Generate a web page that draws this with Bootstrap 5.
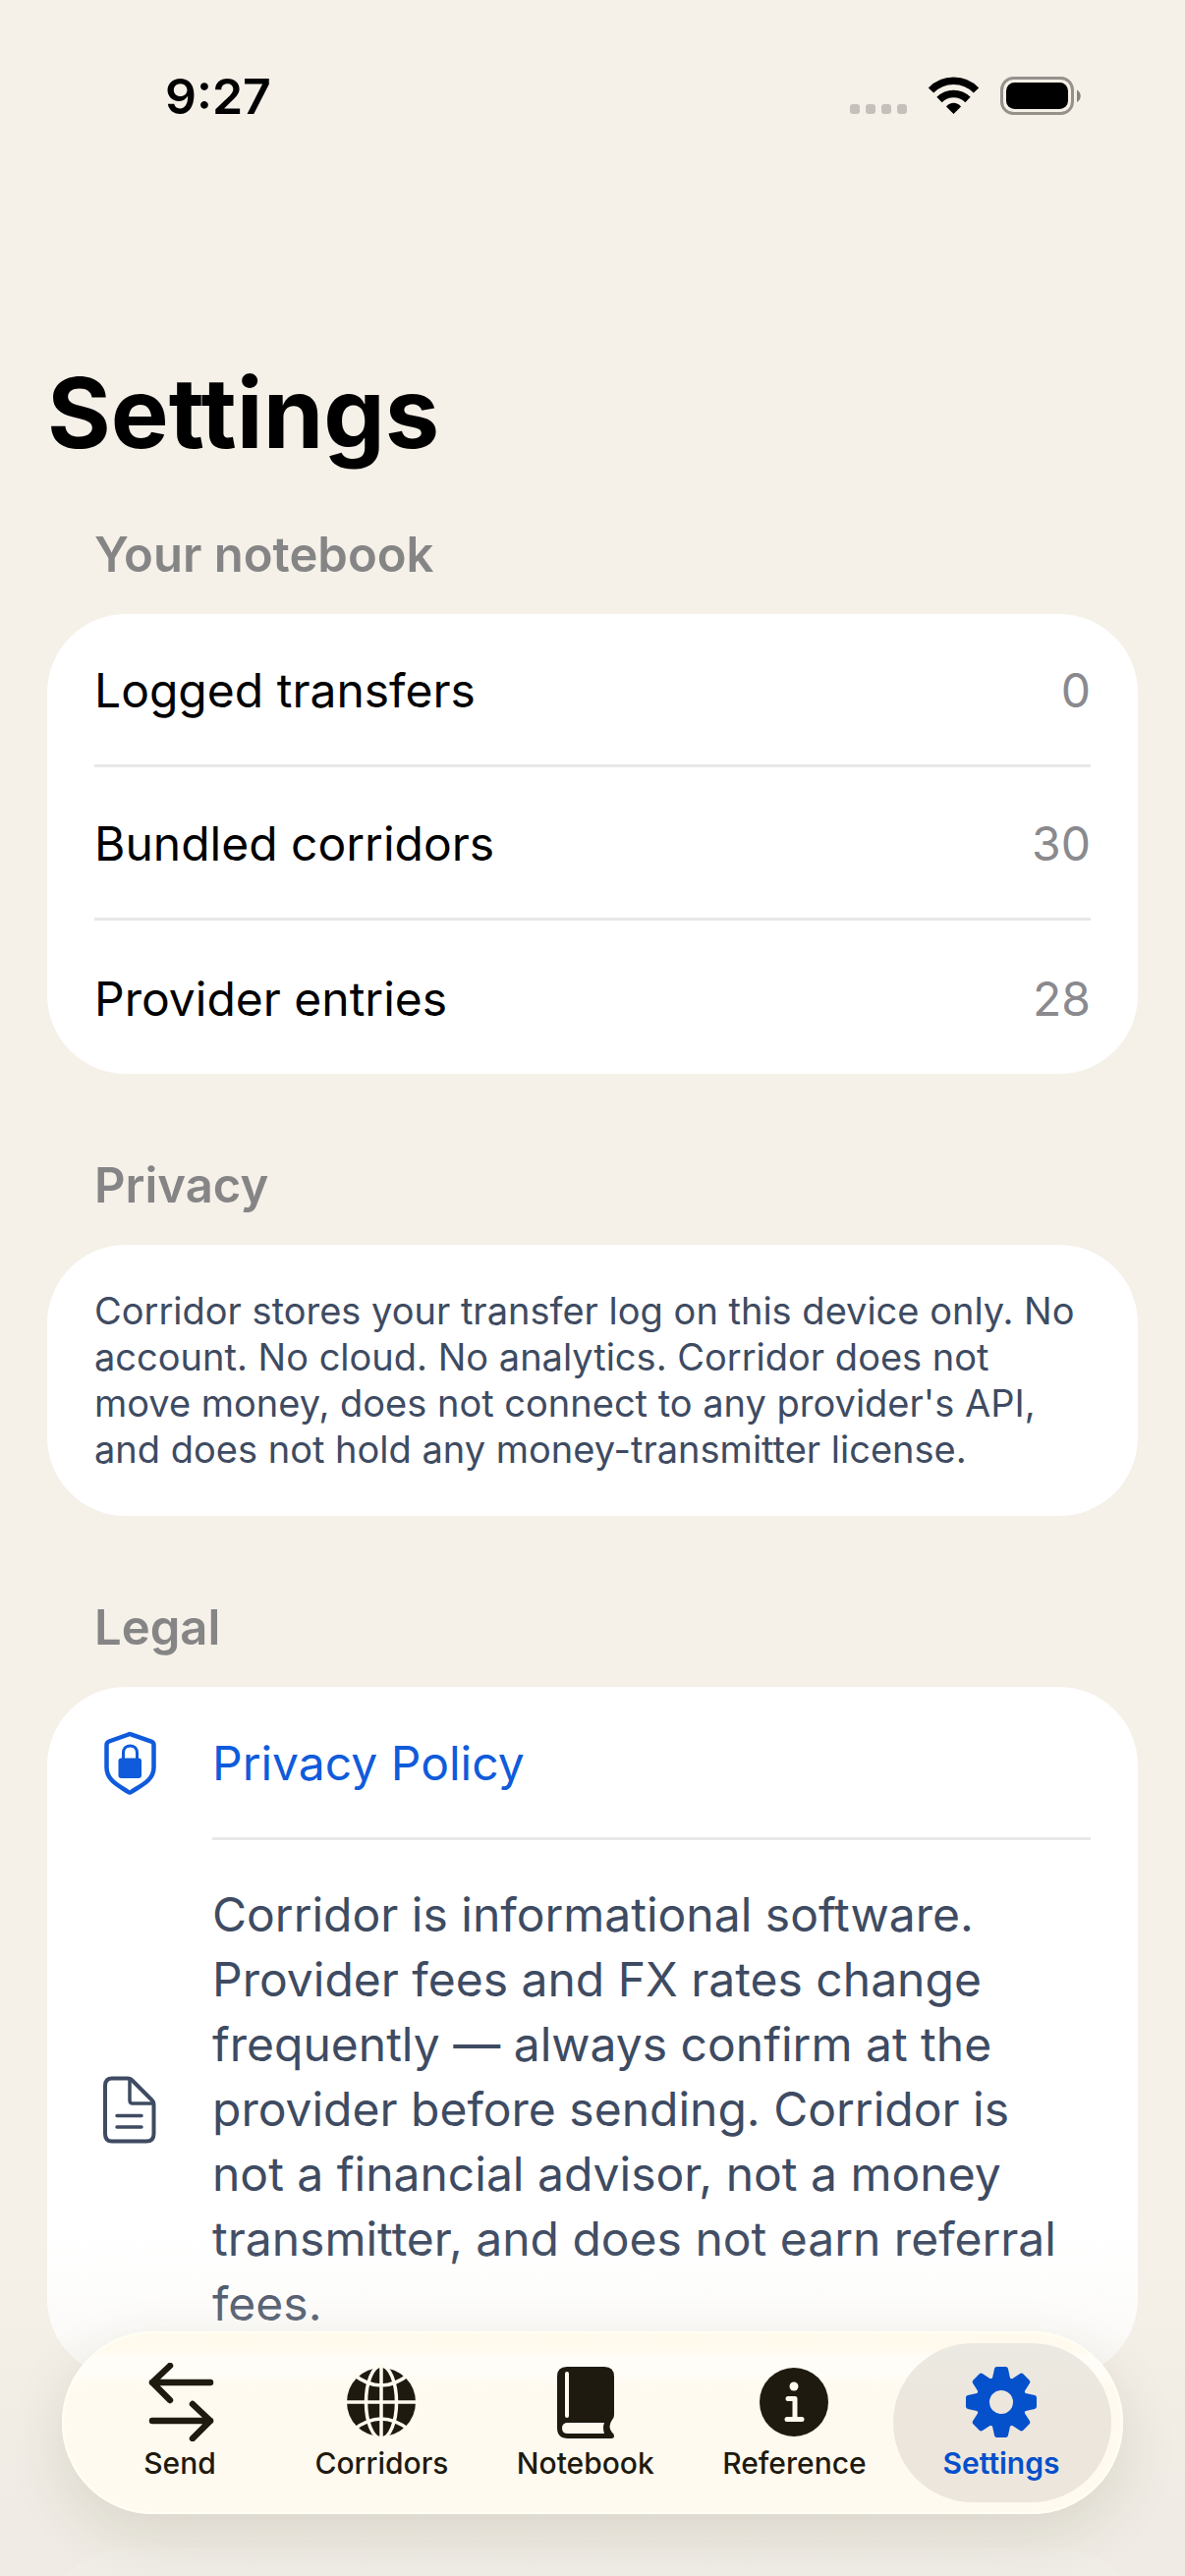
<!DOCTYPE html>
<html lang="en">
<head>
<meta charset="utf-8">
<meta name="viewport" content="width=device-width, initial-scale=1">
<title>Settings</title>
<link href="https://cdn.jsdelivr.net/npm/bootstrap@5.3.0/dist/css/bootstrap.min.css" rel="stylesheet">
<style>
  :root {
    --paper: #f5f0e8;
    --ink: #3e4b62;
    --muted: #868586;
    --brand: #105bdb;
    --brand-deep: #0550cb;
    --tab-ink: #1e1a10;
    --hairline: #e8e8e8;
  }
  body { background: var(--paper); color: #000; font-family: Inter, "Liberation Sans", sans-serif; font-size: 48px; line-height: 60px; }
  .screen { background: var(--paper); }
  .status { height: 196px; padding: 67px 102px 0 168px; }
  .clock { font-size: 50px; font-weight: 600; line-height: 62px; }
  .status-icons { height: 60px; }
  .scroller { overflow-y: auto; scrollbar-width: none; padding: 164px 48px 0; }
  .scroller::-webkit-scrollbar { display: none; }
  .page-title { font-size: 99px; line-height: 120px; font-weight: 700; margin: 0 0 55px; }
  .group-title { font-size: 49px; line-height: 60px; font-weight: 600; color: var(--muted); margin: 0 48px 30px; }
  .group + .group { margin-top: 84px; }
  .group + .group-next { margin-top: 174px; }
  .panel { background: #fff; border-radius: 80px; }
  .panel-row { margin: 0 48px; min-height: 156px; padding-top: 3px; }
  .ruled { border-bottom: 3px solid var(--hairline); }
  .value { color: #8a8a8e; }
  .note-text { font-size: 38px; line-height: 47px; color: var(--ink); padding: 44px 0; margin: 0 48px; }
  .icon-row { margin-left: 48px; gap: 48px; }
  .icon-row .row-body { margin-right: 48px; }
  .policy { color: var(--brand); }
  .legal-text { color: var(--ink); line-height: 66px; padding: 43px 0 42px; }
  .fade-out { height: 420px; pointer-events: none; background: linear-gradient(to bottom, rgba(240,236,226,0) 12%, rgba(240,236,226,.05) 25%, rgba(240,236,226,.2) 38%, rgba(239,235,226,.38) 50%, rgba(239,235,228,.84) 82%, rgba(239,235,228,.93) 100%); }
  .tabs { bottom: 63px; left: 63px; right: 63px; height: 186px; padding: 12px 24px 12px 20px; border-radius: 93px; border: 0; background: linear-gradient(to bottom, #fffaec 0, #fffaed 18px, #fffdf8 26px, #fffdf8 44px, #fffaef 56px, #fffaef 100%); box-shadow: 0 20px 60px rgba(60,60,20,.12), inset 0 0 0 2px #fffef4; }
  .tab { min-width: 200px; padding: 20px 32px 0; gap: 4px; color: var(--tab-ink); font-size: 30px; line-height: 36px; font-weight: 500; }
  .tab.active { color: var(--brand-deep); font-weight: 600; }
  .tab.active::before { content: ""; position: absolute; inset: 0 -12px 0 -10px; border-radius: 81px; background: linear-gradient(to bottom, #ebe9e2 0, #ede6dc 50%, #ede6dc 100%); z-index: -1; }
</style>
<script src="https://cdn.jsdelivr.net/npm/bootstrap@5.3.0/dist/js/bootstrap.bundle.min.js"></script>
</head>
<body>
<div class="screen position-relative vh-100 overflow-hidden d-flex flex-column">

  <header class="status flex-shrink-0 d-flex justify-content-between align-items-start">
    <span class="clock">9:27</span>
    <svg class="status-icons" width="240" viewBox="864 67 240 60" aria-hidden="true">
      <g fill="#c5c1ba">
        <rect x="865" y="106" width="10" height="10" rx="3"/><rect x="881" y="106" width="10" height="10" rx="3"/>
        <rect x="897" y="106" width="10" height="10" rx="3"/><rect x="913" y="106" width="10" height="10" rx="3"/>
      </g>
      <path d="M970.500 116L963 108.500C967 103.500 974 103.500 978 108.500Z"/>
      <path d="M956 101.500C964 93.500 977 93.500 985 101.500M947.500 92C960 79 981 79 993.500 92" fill="none" stroke="#000" stroke-width="7.500"/>
      <rect x="1019.500" y="79.500" width="72" height="36" rx="12" fill="none" stroke="#95918b" stroke-width="3"/>
      <rect x="1024" y="84" width="63" height="27" rx="8.500"/>
      <path d="M1096 91.500C1101 94 1101 101.500 1096 104Z" fill="#86827d"/>
    </svg>
  </header>

  <main class="scroller flex-grow-1">
    <h1 class="page-title">Settings</h1>

    <section class="group">
      <h2 class="group-title">Your notebook</h2>
      <div class="panel">
        <div class="panel-row ruled d-flex justify-content-between align-items-center"><span>Logged transfers</span><span class="value">0</span></div>
        <div class="panel-row ruled d-flex justify-content-between align-items-center"><span>Bundled corridors</span><span class="value">30</span></div>
        <div class="panel-row d-flex justify-content-between align-items-center"><span>Provider entries</span><span class="value">28</span></div>
      </div>
    </section>

    <section class="group">
      <h2 class="group-title">Privacy</h2>
      <div class="panel">
        <p class="note-text">Corridor stores your transfer log on this device only. No account. No cloud. No analytics. Corridor does not move money, does not connect to any provider's API, and does not hold any money-transmitter license.</p>
      </div>
    </section>

    <section class="group">
      <h2 class="group-title">Legal</h2>
      <div class="panel">
        <a class="policy icon-row d-flex align-items-center text-decoration-none" href="#privacy-policy">
          <svg class="flex-shrink-0" width="72" height="72" viewBox="0 0 72 72" aria-hidden="true">
            <path d="M34.500 6.500Q36 5.500 37.500 6.500L58 13.500Q60.500 14.500 60.500 17V40C60.500 53 48 58 37.500 65Q36 66 34.500 65C24 58 12.500 53 12.500 40V17Q12.500 14.500 15 13.500Z" fill="none" stroke="currentColor" stroke-width="4.500"/>
            <rect x="24.500" y="30.500" width="23.500" height="20.500" rx="3" fill="currentColor"/>
            <path d="M29.500 32V25C29.500 15.500 43.500 15.500 43.500 25V32" fill="none" stroke="currentColor" stroke-width="3"/>
          </svg>
          <span class="row-body ruled panel-row ms-0 flex-grow-1 d-flex align-items-center">Privacy Policy</span>
        </a>
        <div class="icon-row d-flex align-items-center">
          <svg class="flex-shrink-0" width="72" height="72" viewBox="0 0 72 72" fill="none" stroke="#3e4b62" stroke-width="4" stroke-linecap="round" stroke-linejoin="round" aria-hidden="true">
            <path d="M18 4.500H34Q36.500 4.500 38 6L58.500 26.500Q60.500 28.500 60.500 31V61Q60.500 68.500 53 68.500H18Q11 68.500 11 61V12Q11 4.500 18 4.500Z"/>
            <path d="M36 6V27Q36 30 39 30H59" stroke-width="3.500"/>
            <path d="M23 42.500H48M23 54H48" stroke-width="3.500"/>
          </svg>
          <p class="row-body legal-text mb-0 flex-grow-1">Corridor is informational software. Provider fees and FX rates change frequently — always confirm at the provider before sending. Corridor is not a financial advisor, not a money transmitter, and does not earn referral fees.</p>
        </div>
      </div>
    </section>

    <section class="group group-next">
      <div class="panel"><div class="panel-row"></div></div>
    </section>
  </main>

  <div class="fade-out position-absolute bottom-0 start-0 end-0"></div>

  <nav class="tabs position-absolute d-flex justify-content-between" aria-label="Main">
    <a class="tab d-flex flex-column align-items-center text-decoration-none" href="#send">
      <svg width="80" height="80" viewBox="0 0 80 80" fill="none" stroke="currentColor" stroke-width="6.500" stroke-linecap="round" stroke-linejoin="round" aria-hidden="true"><path d="M71 20H12M30 3L12 20L30 38M12 59H71M53 42L71 59L53 77"/></svg>
      <span>Send</span>
    </a>
    <a class="tab d-flex flex-column align-items-center text-decoration-none" href="#corridors">
      <svg width="80" height="80" viewBox="0 0 80 80" aria-hidden="true">
        <circle cx="40" cy="40" r="35" fill="currentColor"/>
        <g fill="none" stroke="#fffbf1" stroke-width="3.500"><path d="M4 40H76M40 4V76M12 12Q40 34 68 12M12 68Q40 46 68 68"/><ellipse cx="40" cy="40" rx="15.500" ry="37"/></g>
      </svg>
      <span>Corridors</span>
    </a>
    <a class="tab d-flex flex-column align-items-center text-decoration-none" href="#notebook">
      <svg width="80" height="80" viewBox="0 0 80 80" aria-hidden="true">
        <path d="M21 4H59Q69 4 69 14V53Q69 56 67 58Q62 65 67 71Q69 72 69 74.500Q69 77 66 77H22Q11 77 11 66V14Q11 4 21 4Z" fill="currentColor"/>
        <path d="M21 11V54" stroke="#fffbf1" stroke-width="4" stroke-linecap="round"/>
        <path d="M22 61H59Q57 66 59 72H22Q16 72 16 66.500Q16 61 22 61Z" fill="#fffaef"/>
      </svg>
      <span>Notebook</span>
    </a>
    <a class="tab d-flex flex-column align-items-center text-decoration-none" href="#reference">
      <svg width="80" height="80" viewBox="0 0 80 80" aria-hidden="true">
        <circle cx="40" cy="40" r="35" fill="currentColor"/><circle cx="40" cy="24" r="4.500" fill="#fffaef"/>
        <path d="M34 36.500H41V57M33 57.500H48" fill="none" stroke="#fffaef" stroke-width="5" stroke-linecap="round" stroke-linejoin="round"/>
      </svg>
      <span>Reference</span>
    </a>
    <a class="tab active position-relative z-1 d-flex flex-column align-items-center text-decoration-none" href="#settings" aria-current="page">
      <svg width="80" height="80" viewBox="-40 -40 80 80" fill="currentColor" stroke="currentColor" stroke-width="5" stroke-linejoin="round" aria-hidden="true">
        <defs><path id="tooth" d="M-4.500 -33.500H4.500L7 -22H-7Z"/></defs>
        <circle r="19" fill="none" stroke-width="14"/>
        <use href="#tooth"/><use href="#tooth" transform="rotate(45)"/><use href="#tooth" transform="rotate(90)"/><use href="#tooth" transform="rotate(135)"/>
        <use href="#tooth" transform="rotate(180)"/><use href="#tooth" transform="rotate(225)"/><use href="#tooth" transform="rotate(270)"/><use href="#tooth" transform="rotate(315)"/>
      </svg>
      <span>Settings</span>
    </a>
  </nav>
</div>
</body>
</html>
